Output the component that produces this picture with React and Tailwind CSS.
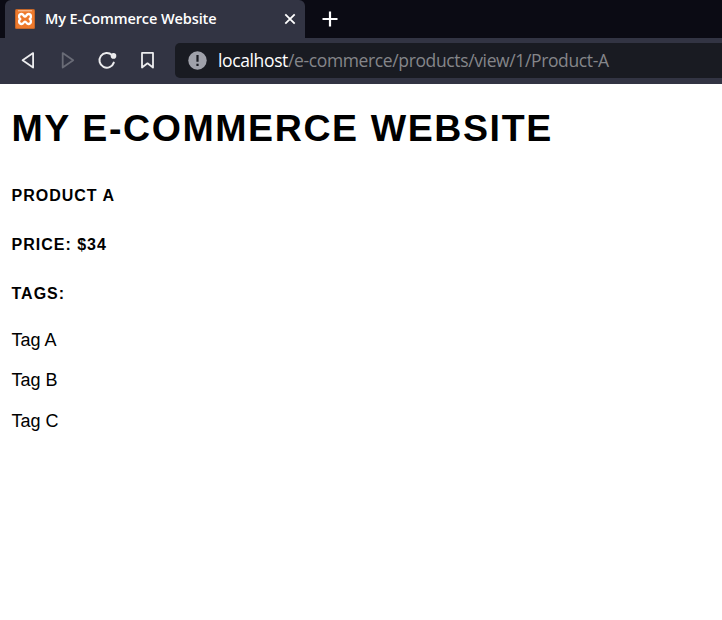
function XamppIcon() {
  return (
    <svg width="20" height="20" viewBox="0 0 20 20" className="shrink-0">
      <rect width="20" height="20" rx="1.5" fill="#c4672a" />
      <rect x="1" y="1" width="18" height="18" rx="1" fill="#ee792c" />
      <rect x="3" y="1" width="14" height="1.4" fill="#f6b384" />
      <path
        d="M10 7.6C8.600 7.600 8.600 5 6.500 5C3.800 5 3.200 8.500 5.300 10C3.200 11.600 3.800 15 6.500 15C8.600 15 8.600 12.600 10 12.600C11.400 12.600 11.400 15 13.500 15C16.200 15 16.800 11.600 14.700 10C16.800 8.500 16.200 5 13.500 5C11.400 5 11.400 7.600 10 7.600Z"
        fill="#ee792c"
        stroke="#fff"
        strokeWidth="2.3"
        strokeLinejoin="round"
      />
    </svg>
  );
}

function TabStrip() {
  return (
    <div className="flex h-[38px] pl-[5px]">
      <div className="flex h-full w-[300px] items-center rounded-t-md bg-[#323443] pl-[10px] pr-[9px]">
        <XamppIcon />
        <span className="ml-[10px] whitespace-nowrap text-[14.5px] font-semibold leading-5 tracking-[-0.1px] text-white">
          My E-Commerce Website
        </span>
        <svg width="12" height="12" viewBox="0 0 12 12" className="ml-auto" stroke="#fff" strokeWidth="1.800">
          <path d="M1.300 1.300l9.400 9.400M10.700 1.300l-9.400 9.400" />
        </svg>
      </div>
      <svg width="16" height="16" viewBox="0 0 16 16" className="ml-[17px] mt-[11px]" stroke="#fff" strokeWidth="2.200">
        <path d="M8 .5v15M.5 8h15" />
      </svg>
    </div>
  );
}

function Toolbar() {
  return (
    <div className="flex h-[46px] items-center bg-[#323443] pb-px">
      <svg width="175" height="36" viewBox="0 0 175 36" fill="none" strokeWidth="1.800" strokeLinejoin="round" className="shrink-0">
        <path d="M33.100 10.100v14.400L22.600 17.300Z" stroke="#ececee" />
        <path d="M62.700 10.100v14.400L73.200 17.300Z" stroke="#696b76" />
        <path d="M112 12.100A7.350 7.350 0 1 0 113.800 19.600" stroke="#ececee" strokeWidth="2" strokeLinecap="round" />
        <circle cx="113.500" cy="12.900" r="2.800" fill="#ececee" />
        <path d="M142 9.900h11v14.600l-5.500-4.200-5.500 4.200Z" stroke="#ececee" />
      </svg>
      <div className="flex h-[35px] flex-1 items-center rounded-l-[5px] bg-[#191b22] pl-[13px]">
        <svg width="19" height="19" viewBox="0 0 19 19" className="shrink-0">
          <circle cx="9.500" cy="9.500" r="9.200" fill="#9fa1aa" />
          <path d="M9.500 4v6.800M9.500 12.700v2.300" stroke="#191b22" strokeWidth="2.200" />
        </svg>
        <span className="ml-[11px] whitespace-nowrap pb-px text-[17.5px] leading-6 tracking-[-0.37px] text-[#85868a]">
          <span className="text-white">localhost</span>/e-commerce/products/view/1/Product-A
        </span>
      </div>
    </div>
  );
}

export default function App() {
  return (
    <div className="h-[620px] w-[722px] overflow-hidden bg-white">
      <header className="bg-[#0b0b14] font-['Open_Sans','Noto_Sans',sans-serif]">
        <TabStrip />
        <Toolbar />
      </header>
      <main className="pl-[11.500px] pt-6 font-['Liberation_Sans',Arial,sans-serif] text-black">
        <h1 className="whitespace-nowrap text-[37.5px] font-bold uppercase leading-10 tracking-[1.6px]">My E-Commerce Website</h1>
        <div className="mt-[38px] flex flex-col gap-[29px] text-[16px] font-bold uppercase leading-5 tracking-[1px]">
          <h3>Product A</h3>
          <h3>Price: $34</h3>
          <h3>Tags:</h3>
        </div>
        <div className="mt-[26px] flex flex-col gap-[20.4px] text-[18px] leading-5">
          <p>Tag A</p>
          <p>Tag B</p>
          <p>Tag C</p>
        </div>
      </main>
    </div>
  );
}
